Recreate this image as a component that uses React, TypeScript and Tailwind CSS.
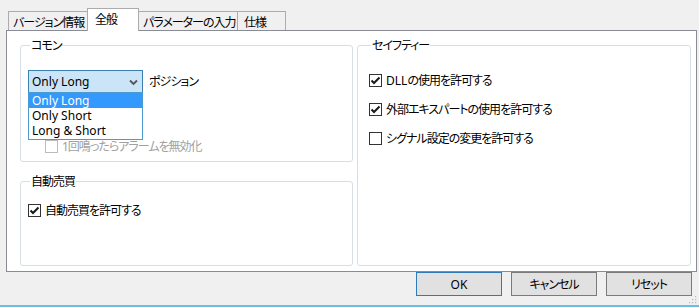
import React from "react";

const font = "font-['Noto_Sans','Noto_Sans_CJK_JP',sans-serif] [font-feature-settings:'palt'] text-[12px] leading-[15px] tracking-[-1px]";

function Check({ checked, disabled }: { checked?: boolean; disabled?: boolean }) {
  return (
    <span
      className={`inline-flex items-center justify-center w-[13px] h-[13px] shrink-0 border bg-white ${
        disabled ? "border-[#bcbcbc]" : "border-[#333333]"
      }`}
    >
      {checked && (
        <svg width="11" height="11" viewBox="0 0 11 11">
          <path d="M1.5 5.5 L4 8 L9.5 2.5" fill="none" stroke="#1a1a1a" strokeWidth="2" />
        </svg>
      )}
    </span>
  );
}

function Row({ label, checked, disabled, latin }: { label: string; checked?: boolean; disabled?: boolean; latin?: string }) {
  return (
    <div className="flex items-center h-[15px]">
      <Check checked={checked} disabled={disabled} />
      <span className={`ml-[4px] whitespace-nowrap ${disabled ? "text-[#a0a0a0]" : "text-black"}`}>
        {latin && <span className="tracking-[0px]">{latin}</span>}
        {label}
      </span>
    </div>
  );
}

function Tab({ label, w, pl, active, first }: { label: string; w: number; pl: number; active?: boolean; first?: boolean }) {
  const width = { 80: "w-[80px]", 52: "w-[52px]", 100: "w-[100px]", 49: "w-[49px]" }[w as 80 | 52 | 100 | 49];
  const padl = { 4: "pl-[4px]", 6: "pl-[6px]", 7: "pl-[7px]" }[pl as 4 | 6 | 7];
  return (
    <div
      className={`${width} ${padl} ${first ? "" : "-ml-px"} border-l border-t border-r border-[#acacac] whitespace-nowrap ${
        active ? "relative z-10 h-[23px] mb-[-1px] bg-white pt-[3px]" : "h-[19px] bg-[#f0f0f0] pt-[3px]"
      }`}
    >
      {label}
    </div>
  );
}

export default function App() {
  return (
    <div className={`relative w-[699px] h-[307px] bg-[#f0f0f0] flex flex-col overflow-hidden text-black ${font}`}>
      {/* Tab strip */}
      <div className="h-[30px] flex items-end pl-[8px]">
        <Tab label="バージョン情報" w={80} pl={4} first />
        <Tab label="全般" w={52} pl={7} active />
        <Tab label="パラメーターの入力" w={100} pl={4} />
        <Tab label="仕様" w={49} pl={6} />
      </div>

      {/* Panel */}
      <div className="ml-[6px] w-[691px] h-[242px] border border-[#898c95] bg-white flex pl-[13px] pr-[5px] pt-[7px] pb-[5px] gap-[4px]">
        {/* Left column */}
        <div className="w-[333px] flex flex-col gap-[12px]">
          <fieldset className="h-[124px] border border-[#d5dfe5] rounded-[3px] px-[7px]">
            <legend className="ml-[2px] px-[1px]">コモン</legend>
            <div className="mt-[17px] flex items-center relative">
              <div className="relative w-[115px] h-[23px] border border-[#3c7fb1] bg-[#cce4f7] flex items-center pl-[3px] tracking-normal">
                <span>Only Long</span>
                <svg className="absolute left-[100px] top-[8px]" width="9" height="7" viewBox="0 0 9 7">
                  <polyline points="1,1.5 4.5,5 8,1.5" fill="none" stroke="#555" strokeWidth="1.8" />
                </svg>
                <ul className="absolute left-[-1px] top-[21px] w-[115px] border border-[#4a9cd0] bg-white z-20 pb-[1px]">
                  <li className="h-[15px] leading-[15px] bg-[#3399ff] text-white pl-[3px]">Only Long</li>
                  <li className="h-[15px] leading-[15px] pl-[3px]">Only Short</li>
                  <li className="h-[15px] leading-[15px] pl-[3px]">Long &amp; Short</li>
                </ul>
              </div>
              <span className="ml-[6px]">ポジション</span>
            </div>
            <div className="mt-[46px] ml-[17px]">
              <Row label="1回鳴ったらアラームを無効化" disabled />
            </div>
          </fieldset>

          <fieldset className="h-[92px] border border-[#d5dfe5] rounded-[3px] px-[7px]">
            <legend className="ml-[2px] px-[1px]">自動売買</legend>
            <div className="mt-[14px]">
              <Row label="自動売買を許可する" checked />
            </div>
          </fieldset>
        </div>

        {/* Right column */}
        <fieldset className="w-[334px] h-[228px] border border-[#d5dfe5] rounded-[3px] px-[11px]">
          <legend className="ml-[2px] px-[1px]">セイフティー</legend>
          <div className="mt-[20px] flex flex-col gap-[14px]">
            <Row latin="DLL" label="の使用を許可する" checked />
            <Row label="外部エキスパートの使用を許可する" checked />
            <Row label="シグナル設定の変更を許可する" />
          </div>
        </fieldset>
      </div>

      {/* Buttons */}
      <div className="h-[24px] flex justify-end pr-[7px] gap-[9px]">
        <button className="w-[86px] h-[24px] border border-[#2f7ab8] bg-[#e1e1e1] tracking-normal">OK</button>
        <button className="w-[86px] h-[24px] border border-[#7a7a7a] bg-[#e1e1e1]">キャンセル</button>
        <button className="w-[86px] h-[24px] border border-[#7a7a7a] bg-[#e1e1e1]">リセット</button>
      </div>

      <div className="flex-1" />
      <div className="h-[2px] bg-[#62c1e5]" />

      {/* Resize grip */}
      <svg className="absolute right-[2px] bottom-[3px]" width="8" height="8" viewBox="0 0 8 8">
        <rect x="6" y="0" width="1.2" height="1.2" fill="#b8b8b8" />
        <rect x="3" y="3" width="1.2" height="1.2" fill="#b8b8b8" />
        <rect x="6" y="3" width="1.2" height="1.2" fill="#b8b8b8" />
        <rect x="0" y="6" width="1.2" height="1.2" fill="#b8b8b8" />
        <rect x="3" y="6" width="1.2" height="1.2" fill="#b8b8b8" />
        <rect x="6" y="6" width="1.2" height="1.2" fill="#b8b8b8" />
      </svg>
    </div>
  );
}
